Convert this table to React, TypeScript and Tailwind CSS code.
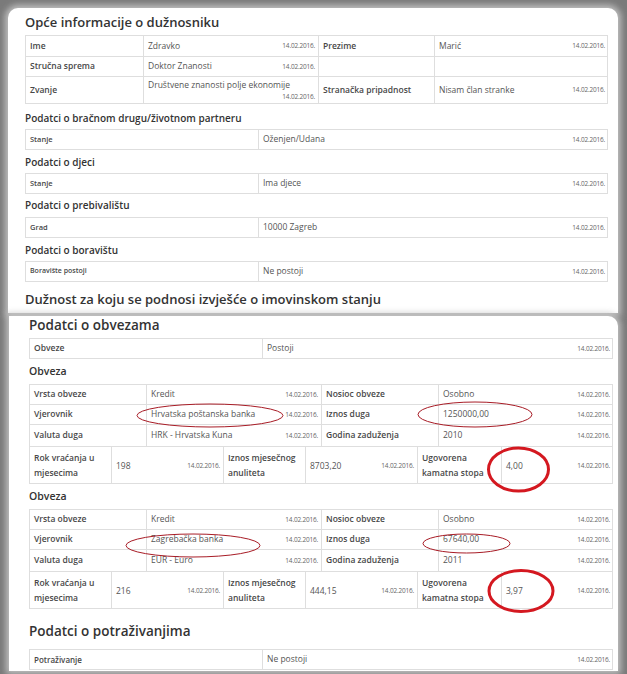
import React from "react";

const DATE = "14.02.2016.";
const font = { fontFamily: '"Open Sans", "Liberation Sans", sans-serif' };

function Date() {
  return <span className="text-[6.5px] text-[#666] tracking-[-0.2px] whitespace-nowrap">{DATE}</span>;
}

function Label({ text, size = "text-[8.5px]" }: { text: string; size?: string }) {
  return (
    <div className={`border-l border-t border-[#dedede] px-[4px] flex items-center font-semibold text-[#484848] ${size}`}>
      {text}
    </div>
  );
}

function Value({ text, date = true }: { text: string; date?: boolean }) {
  return (
    <div className="border-l border-t border-[#dedede] pl-[4px] pr-[3px] flex items-center justify-between text-[8.5px] text-[#555]">
      <span>{text}</span>
      {date && <Date />}
    </div>
  );
}

function Heading({ text, className }: { text: string; className: string }) {
  return <div className={`flex font-semibold text-[#333] ${className}`}>{text}</div>;
}

function SingleTable({ label, value, labelSize = "text-[7.5px]", cols }: { label: string; value: string; labelSize?: string; cols: string }) {
  return (
    <div className={`grid ${cols} h-[21px] border-r border-b border-[#dedede]`}>
      <Label text={label} size={labelSize} />
      <Value text={value} />
    </div>
  );
}

interface Obveza {
  vrsta: string;
  nositelj: string;
  vjerovnik: string;
  iznos: string;
  valuta: string;
  godina: string;
  rok: string;
  anuitet: string;
  kamata: string;
}

function ObvezaTable({ o }: { o: Obveza }) {
  const row = "grid grid-cols-[117px_175px_117px_175px] h-[20px]";
  return (
    <div className="border-r border-b border-[#dedede]">
      <div className={row}>
        <Label text="Vrsta obveze" />
        <Value text={o.vrsta} />
        <Label text="Nosioc obveze" />
        <Value text={o.nositelj} />
      </div>
      <div className={row}>
        <Label text="Vjerovnik" />
        <Value text={o.vjerovnik} />
        <Label text="Iznos duga" />
        <Value text={o.iznos} />
      </div>
      <div className={`${row} h-[22px]`}>
        <Label text="Valuta duga" />
        <Value text={o.valuta} />
        <Label text="Godina zaduženja" />
        <Value text={o.godina} />
      </div>
      <div className="grid grid-cols-[82px_112px_82px_112px_84px_112px] h-[37px] leading-[15px]">
        <Label text="Rok vraćanja u mjesecima" />
        <Value text={o.rok} />
        <Label text="Iznos mjesečnog anuliteta" />
        <Value text={o.anuitet} />
        <Label text="Ugovorena kamatna stopa" />
        <Value text={o.kamata} />
      </div>
    </div>
  );
}

const obveze: Obveza[] = [
  {
    vrsta: "Kredit",
    nositelj: "Osobno",
    vjerovnik: "Hrvatska poštanska banka",
    iznos: "1250000,00",
    valuta: "HRK - Hrvatska Kuna",
    godina: "2010",
    rok: "198",
    anuitet: "8703,20",
    kamata: "4,00",
  },
  {
    vrsta: "Kredit",
    nositelj: "Osobno",
    vjerovnik: "Zagrebačka banka",
    iznos: "67640,00",
    valuta: "EUR - Euro",
    godina: "2011",
    rok: "216",
    anuitet: "444,15",
    kamata: "3,97",
  },
];

export default function App() {
  const top = "grid-cols-[233px_350px]";
  const bottom = "grid-cols-[233px_351px]";
  return (
    <div style={font} className="relative w-[627px] h-[674px] overflow-hidden bg-[#7a7a7a] flex flex-col pt-[8px]">
      {/* top screenshot */}
      <div className="ml-[8px] w-[610px] h-[305px] bg-white rounded-t-[10px] pl-[17px] pr-[10px] shadow-[0_0_6px_3px_rgba(200,200,200,0.9)]">
        <Heading text="Opće informacije o dužnosniku" className="h-[27px] items-center pt-[3px] text-[13px]" />
        <div className="border-r border-b border-[#dedede]">
          <div className="grid grid-cols-[118px_175px_116px_174px] h-[21px]">
            <Label text="Ime" />
            <Value text="Zdravko" />
            <Label text="Prezime" />
            <Value text="Marić" />
          </div>
          <div className="grid grid-cols-[118px_175px_116px_174px] h-[20px]">
            <Label text="Stručna sprema" />
            <Value text="Doktor Znanosti" />
            <div className="border-l border-t border-[#dedede]" />
            <div className="border-l border-t border-[#dedede]" />
          </div>
          <div className="grid grid-cols-[118px_175px_116px_174px] h-[27px]">
            <Label text="Zvanje" />
            <div className="border-l border-t border-[#dedede] pl-[4px] pr-[3px] flex flex-col justify-center text-[8.5px] text-[#555] leading-[12px]">
              <span>Društvene znanosti polje ekonomije</span>
              <span className="self-end leading-[10px]"><Date /></span>
            </div>
            <Label text="Stranačka pripadnost" />
            <Value text="Nisam član stranke" />
          </div>
        </div>
        <Heading text="Podatci o bračnom drugu/životnom partneru" className="h-[25px] items-center pt-[4px] text-[10px]" />
        <SingleTable label="Stanje" value="Oženjen/Udana" cols={top} />
        <Heading text="Podatci o djeci" className="h-[23px] items-center pt-[2px] text-[10px]" />
        <SingleTable label="Stanje" value="Ima djece" cols={top} />
        <Heading text="Podatci o prebivalištu" className="h-[23px] items-center text-[10px]" />
        <SingleTable label="Grad" value="10000 Zagreb" cols={top} />
        <Heading text="Podatci o boravištu" className="h-[23px] items-center pt-[2px] text-[10px]" />
        <SingleTable label="Boravište postoji" value="Ne postoji" labelSize="text-[7px]" cols={top} />
        <Heading text="Dužnost za koju se podnosi izvješće o imovinskom stanju" className="h-[34px] items-center pt-[2px] text-[13px]" />
      </div>

      {/* bottom screenshot */}
      <div className="mt-[3px] ml-[9px] w-[609px] h-[355px] bg-white rounded-tr-[10px] pl-[20px] pr-[5px] shadow-[0_0_6px_3px_rgba(200,200,200,0.9)]">
        <Heading text="Podatci o obvezama" className="h-[22px] items-center pb-[4px] text-[13.5px]" />
        <SingleTable label="Obveze" value="Postoji" labelSize="text-[8.5px]" cols={bottom} />
        <Heading text="Obveza" className="h-[25px] items-end pb-[4px] text-[10.5px]" />
        <ObvezaTable o={obveze[0]} />
        <Heading text="Obveza" className="h-[25px] items-end pb-[4px] text-[10.5px]" />
        <ObvezaTable o={obveze[1]} />
        <Heading text="Podatci o potraživanjima" className="h-[40px] items-center pt-[4px] text-[13.5px]" />
        <SingleTable label="Potraživanje" value="Ne postoji" labelSize="text-[8px]" cols={bottom} />
      </div>

      {/* red annotations drawn over the screenshots */}
      <svg className="absolute inset-0 pointer-events-none" width="627" height="674" viewBox="0 0 627 674">
        <ellipse cx="210" cy="415.5" rx="73" ry="11.5" fill="none" stroke="#a81c26" strokeWidth="1" />
        <ellipse cx="475" cy="414.5" rx="57" ry="12.5" fill="none" stroke="#a81c26" strokeWidth="1" />
        <ellipse cx="518.5" cy="469.5" rx="30" ry="21.5" fill="none" stroke="#d41820" strokeWidth="3" />
        <ellipse cx="193" cy="545.5" rx="67" ry="11.5" fill="none" stroke="#a81c26" strokeWidth="1" />
        <ellipse cx="466.5" cy="543.5" rx="43.5" ry="9.5" fill="none" stroke="#a81c26" strokeWidth="1" />
        <ellipse cx="521" cy="591" rx="32" ry="20.5" fill="none" stroke="#d41820" strokeWidth="3" />
      </svg>
    </div>
  );
}
